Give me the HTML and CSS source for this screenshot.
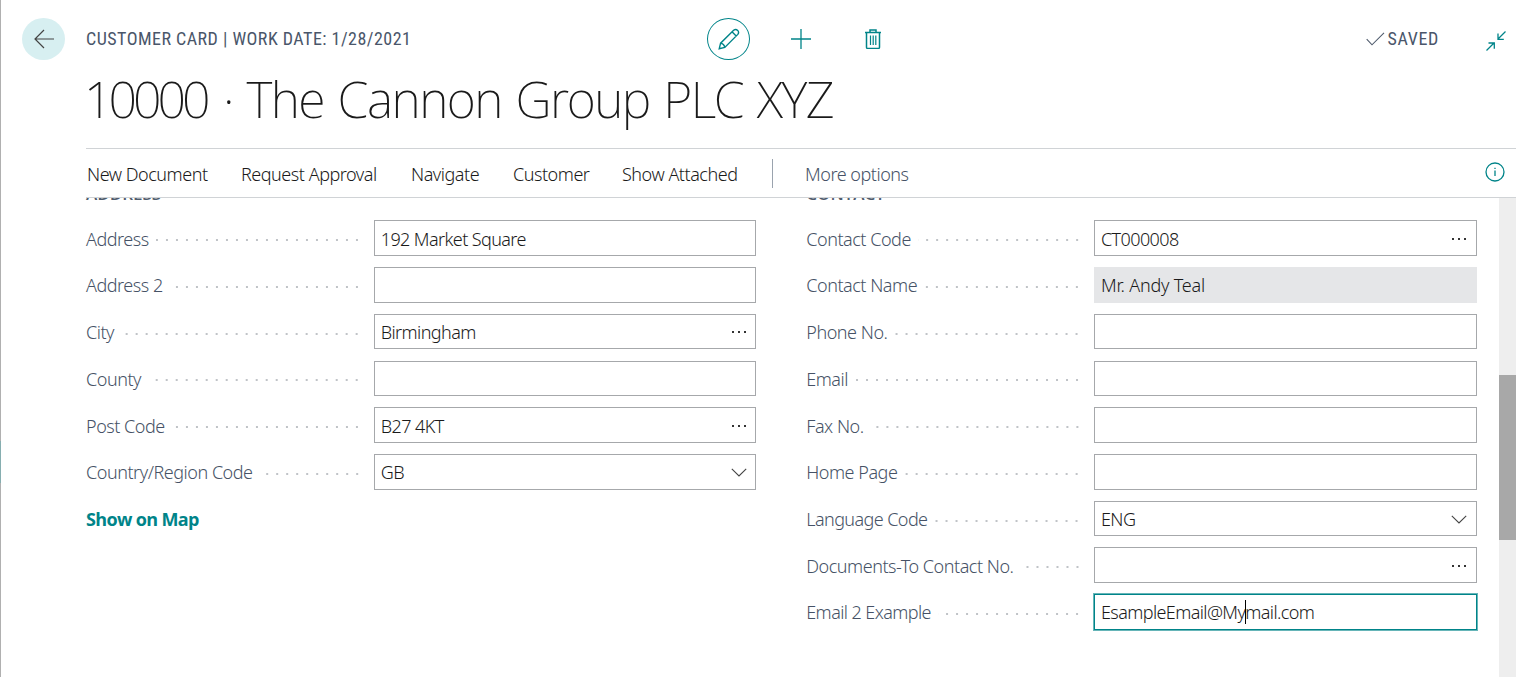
FILE: index.html
```html
<!DOCTYPE html>
<html lang="en">
<head>
<meta charset="utf-8">
<title>Customer Card</title>
<link rel="stylesheet" href="styles.css">
</head>
<body>
<div class="page">
  <header class="topbar">
    <button class="back" aria-label="Back">
      <svg width="22" height="20" viewBox="0 0 22 20"><path d="M21 10H2M11 1L2 10L11 19"/></svg>
    </button>
    <span class="crumb">CUSTOMER CARD | WORK DATE: 1/28/2021</span>
    <div class="actions">
      <span class="edit"><svg width="22" height="22" viewBox="0 0 22 22"><path d="M1.2 20.8L2.6 15.2L15.6 2.2Q17.8 .6 19.7 2.4Q21.4 4.3 19.8 6.4L6.8 19.4ZM2.6 15.2Q6 15.6 6.8 19.4M14 3.8L18.2 8"/></svg></span>
      <svg class="plus" width="20" height="20" viewBox="0 0 20 20"><path d="M10 0V20M0 10H20"/></svg>
      <svg class="bin" width="18" height="20" viewBox="0 0 18 20"><path d="M1 3.5H17M6 3V1H12V3M2.5 3.5V18.2Q2.5 19.5 3.8 19.5H14.2Q15.5 19.5 15.5 18.2V3.5"/><path class="ribs" d="M6.5 6.5V16M9.2 6.5V16M11.8 6.5V16"/></svg>
    </div>
    <div class="status"><svg width="19" height="14" viewBox="0 0 19 14"><path d="M.7 7.2L6 12.8L18 .8"/></svg><span>SAVED</span></div>
    <svg class="shrink" width="20" height="20" viewBox="0 0 20 20"><path d="M19.5 .5L12.5 7.5M12 2.5V8.3H17.8M.5 19.5L7.5 12.5M2.5 12H8.3V17.8"/></svg>
  </header>
  <h1 class="title"><span class="number">10000</span> · The Cannon Group PLC XYZ</h1>
  <nav class="menu">
    <a class="m1">New Document</a><a class="m2">Request Approval</a><a class="m3">Navigate</a><a class="m4">Customer</a><a class="m5">Show Attached</a>
    <i class="divider"></i><a class="more">More options</a>
    <svg class="info" width="20" height="20" viewBox="0 0 20 20"><circle cx="10" cy="10" r="9"/><path d="M10 8.5V14M10 5.8V7"/></svg>
  </nav>
  <main class="content">
    <section class="group">
      <h2>ADDRESS</h2>
      <div class="row"><label>Address</label><i class="dots"></i><div class="field">192 Market Square</div></div>
      <div class="row"><label>Address 2</label><i class="dots"></i><div class="field"></div></div>
      <div class="row"><label>City</label><i class="dots"></i><div class="field">Birmingham<svg class="more-dots" width="16" height="4" viewBox="0 0 16 4"><path d="M1 1h2v2H1zM7 1h2v2H7zM13 1h2v2h-2z"/></svg></div></div>
      <div class="row"><label>County</label><i class="dots"></i><div class="field"></div></div>
      <div class="row"><label>Post Code</label><i class="dots"></i><div class="field">B27 4KT<svg class="more-dots" width="16" height="4" viewBox="0 0 16 4"><path d="M1 1h2v2H1zM7 1h2v2H7zM13 1h2v2h-2z"/></svg></div></div>
      <div class="row"><label>Country/Region Code</label><i class="dots"></i><div class="field">GB<svg class="chevron" width="16" height="9" viewBox="0 0 16 9"><path d="M.8 .8L8 8L15.2 .8"/></svg></div></div>
      <a class="map">Show on Map</a>
    </section>
    <section class="group">
      <h2>CONTACT</h2>
      <div class="row"><label>Contact Code</label><i class="dots"></i><div class="field">CT000008<svg class="more-dots" width="16" height="4" viewBox="0 0 16 4"><path d="M1 1h2v2H1zM7 1h2v2H7zM13 1h2v2h-2z"/></svg></div></div>
      <div class="row"><label>Contact Name</label><i class="dots"></i><div class="field readonly">Mr. Andy Teal</div></div>
      <div class="row"><label>Phone No.</label><i class="dots"></i><div class="field"></div></div>
      <div class="row"><label>Email</label><i class="dots"></i><div class="field"></div></div>
      <div class="row"><label>Fax No.</label><i class="dots"></i><div class="field"></div></div>
      <div class="row"><label>Home Page</label><i class="dots"></i><div class="field"></div></div>
      <div class="row"><label class="tight">Language Code</label><i class="dots"></i><div class="field">ENG<svg class="chevron" width="16" height="9" viewBox="0 0 16 9"><path d="M.8 .8L8 8L15.2 .8"/></svg></div></div>
      <div class="row"><label>Documents-To Contact No.</label><i class="dots"></i><div class="field"><svg class="more-dots" width="16" height="4" viewBox="0 0 16 4"><path d="M1 1h2v2H1zM7 1h2v2H7zM13 1h2v2h-2z"/></svg></div></div>
      <div class="row"><label class="tight">Email 2 Example</label><i class="dots"></i><div class="field focused">EsampleEmail@My<i class="caret"></i>mail.com</div></div>
    </section>
    <div class="scrollbar"><div class="thumb"></div></div>
  </main>
</div>
</body>
</html>
```
FILE: styles.css
```css
* { box-sizing: border-box; }
body {
  margin: 0;
  background: #fff;
  color: #1a1a1a;
  font: 300 18px/24px "Noto Sans", "Open Sans", sans-serif;
  letter-spacing: -.47px;
  overflow: hidden;
}
svg { fill: none; stroke: #008489; flex: none; }
.page {
  width: 1516px;
  height: 677px;
  border-left: 1px solid #b0b0b0;
  border-image: linear-gradient(#b0b0b0 441px, #86aeb0 441px 483px, #b0b0b0 483px) 1;
  display: flex;
  flex-direction: column;
}

/* Top bar */
.topbar { display: flex; align-items: center; height: 78px; padding: 0 10px 0 21px; flex: none; }
.back {
  width: 43px; height: 42px; padding: 0; border: 0; border-radius: 50%;
  background: #d7eff1; display: flex; align-items: center; justify-content: center;
}
.back svg { stroke: #444; stroke-width: 1.2; }
.crumb, .status { font-family: Roboto, sans-serif; font-size: 18px; font-weight: 400; font-stretch: 75%; letter-spacing: .47px; color: #4a566a; }
.crumb { width: 621px; margin-left: 21px; white-space: nowrap; }
.actions { display: flex; align-items: center; }
.edit {
  width: 43px; height: 42px; border: 1px solid #008489; border-radius: 50%;
  display: flex; align-items: center; justify-content: center;
}
.edit svg { stroke-width: 1.4; }
.plus { margin-left: 41px; stroke-width: 1.3; }
.bin { margin-left: 53px; stroke-width: 1.5; }
.ribs { stroke-width: 1.2; }
.status { margin-left: auto; display: flex; align-items: center; gap: 2px; }
.status span { letter-spacing: .65px; }
.status svg { stroke: #505c6d; stroke-width: 1.1; }
.shrink { margin-left: 47px; margin-top: 4px; stroke-width: 1.3; }

.title {
  margin: 0 0 0 83px; height: 70px; flex: none;
  font: 200 50px/42px "Noto Sans", sans-serif;
  letter-spacing: -1.5px; word-spacing: 2px; white-space: nowrap;
}
.number { letter-spacing: -4px; margin-right: 3px; }

/* Action menu */
.menu {
  margin-left: 85px; height: 50px; flex: none;
  border-top: 1px solid #d0d3d6; border-bottom: 1px solid #d0d3d6;
  display: flex; align-items: center; white-space: nowrap;
}
.menu a { padding-top: 2px; }
.m1 { width: 154px; margin-left: 1px; }
.m2 { width: 170px; }
.m3 { width: 102px; }
.m4 { width: 109px; }
.m5 { width: 150px; }
.divider { width: 1px; height: 29px; background: #9aa3ae; margin-right: 32px; }
.menu .more { color: #465266; }
.info { margin: 0 11px 2px auto; stroke-width: 1.3; }

/* Card body, scrolled part way */
.content { flex: 1; display: flex; overflow: hidden; padding-left: 85px; min-height: 0; }
.group { width: 670px; margin-right: 50.5px; margin-top: -13px; }
.group + .group { width: 671px; margin-right: 22px; }
h2 { margin: 0; height: 35.3px; font: 600 17px/18px "Open Sans", sans-serif; letter-spacing: 0; color: #505c6d; }
.row { display: flex; align-items: center; height: 35.6px; margin-bottom: 11.15px; }
label { padding: 1px 7px 0 0; color: #465266; white-space: nowrap; }
.tight { letter-spacing: -.58px; }
.dots {
  flex: 1; height: 2px; margin: 4px 12px 0 0;
  background: radial-gradient(circle at 50% 50%, #c0c3c7 1px, transparent 1.4px) right center / 10px 2px repeat-x;
}
.field {
  flex: none; width: 382px; height: 100%; border: 1px solid #a6a8ab; padding: 1px 8px 0 6px;
  display: flex; align-items: center; white-space: nowrap; letter-spacing: -.6px;
}
.group + .group .field { width: 383px; padding-right: 9px; }
.field svg { margin-left: auto; }
.more-dots { fill: #333; stroke: none; }
.chevron { stroke: #444; stroke-width: 1.1; }
.field.readonly { background: #e5e6e8; border-color: #e5e6e8; letter-spacing: -.2px; }
.focused { border-color: #008489; box-shadow: 0 0 0 1px #66b5b8; }
.caret { width: 1px; height: 24px; margin-right: -1px; background: #000; }
.map { display: block; padding-top: 6px; font-family: "Open Sans", sans-serif; font-weight: 700; letter-spacing: -.65px; color: #008489; }
.scrollbar { width: 17px; background: #eee; padding-top: 177px; }
.thumb { height: 165px; background: #a8a8a8; }
```
